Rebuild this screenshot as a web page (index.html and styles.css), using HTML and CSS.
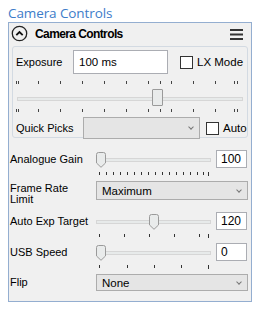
FILE: index.html
```html
<!DOCTYPE html>
<html lang="en">
<head>
    <meta charset="UTF-8">
    <meta name="viewport" content="width=device-width, initial-scale=1.0">
    <title>Camera Controls</title>
    <link rel="stylesheet" href="styles.css">
</head>
<body>
    <div class="title">Camera Controls</div>
    <div class="panel">
        <div class="header">
            <svg class="collapse" width="17" height="17" viewBox="0 0 17 17">
                <circle cx="8.5" cy="8.5" r="7.2" fill="none" stroke="#222" stroke-width="1.3"/>
                <path d="M5.3 10.2 L8.5 7 L11.7 10.2" fill="none" stroke="#111" stroke-width="1.8"/>
            </svg>
            <span class="header-title">Camera Controls</span>
            <svg class="menu" width="13" height="11" viewBox="0 0 13 11">
                <rect x="0" y="0" width="13" height="2" fill="#333"/>
                <rect x="0" y="4.5" width="13" height="2" fill="#333"/>
                <rect x="0" y="9" width="13" height="2" fill="#333"/>
            </svg>
        </div>

        <div class="group">
            <div class="exp-row">
                <span class="label exp-label">Exposure</span>
                <div class="textbox exp-box">100 ms</div>
                <span class="check"><span class="box"></span>LX Mode</span>
            </div>
            <div class="exp-slider">
                <svg class="ticks" width="226" height="4">
                    <g stroke="#444" stroke-width="1">
                        <line x1="2.5" y1="0" x2="2.5" y2="3"/><line x1="4.5" y1="0" x2="4.5" y2="3"/>
                        <line x1="24.5" y1="0" x2="24.5" y2="3"/><line x1="46.5" y1="0" x2="46.5" y2="3"/>
                        <line x1="68.5" y1="0" x2="68.5" y2="3"/><line x1="90.5" y1="0" x2="90.5" y2="3"/>
                        <line x1="112.5" y1="0" x2="112.5" y2="3"/><line x1="134.5" y1="0" x2="134.5" y2="3"/>
                        <line x1="146.5" y1="0" x2="146.5" y2="3"/><line x1="157.5" y1="0" x2="157.5" y2="3"/>
                        <line x1="179.5" y1="0" x2="179.5" y2="3"/><line x1="201.5" y1="0" x2="201.5" y2="3"/>
                        <line x1="220.5" y1="0" x2="220.5" y2="3"/><line x1="223.5" y1="0" x2="223.5" y2="3"/>
                    </g>
                </svg>
                <div class="track-area tall">
                    <div class="track"></div>
                    <div class="thumb-rect" style="left: 135px"></div>
                </div>
                <svg class="ticks" width="226" height="4">
                    <g stroke="#444" stroke-width="1">
                        <line x1="2.5" y1="0" x2="2.5" y2="3"/><line x1="4.5" y1="0" x2="4.5" y2="3"/>
                        <line x1="24.5" y1="0" x2="24.5" y2="3"/><line x1="46.5" y1="0" x2="46.5" y2="3"/>
                        <line x1="68.5" y1="0" x2="68.5" y2="3"/><line x1="90.5" y1="0" x2="90.5" y2="3"/>
                        <line x1="112.5" y1="0" x2="112.5" y2="3"/><line x1="134.5" y1="0" x2="134.5" y2="3"/>
                        <line x1="146.5" y1="0" x2="146.5" y2="3"/><line x1="157.5" y1="0" x2="157.5" y2="3"/>
                        <line x1="179.5" y1="0" x2="179.5" y2="3"/><line x1="201.5" y1="0" x2="201.5" y2="3"/>
                        <line x1="220.5" y1="0" x2="220.5" y2="3"/><line x1="223.5" y1="0" x2="223.5" y2="3"/>
                    </g>
                </svg>
            </div>
            <div class="qp-row">
                <span class="label qp-label">Quick Picks</span>
                <div class="combo qp-combo"><span></span><span class="chevron"></span></div>
                <span class="check"><span class="box"></span>Auto</span>
            </div>
        </div>

        <div class="row gain-row">
            <span class="label row-label">Analogue Gain</span>
            <div class="slider">
                <div class="track-area">
                    <div class="track"></div>
                    <svg class="thumb" style="left: 0px" width="10" height="16" viewBox="0 0 10 16">
                        <path d="M0.5 2.5 Q0.5 0.5 2.5 0.5 L7.5 0.5 Q9.5 0.5 9.5 2.5 L9.5 11 L5 15.3 L0.5 11 Z" fill="#e9ebeb" stroke="#9a9a9a"/>
                    </svg>
                </div>
                <svg class="ticks low" width="115" height="4">
                    <g stroke="#333" stroke-width="1">
                        <line x1="3.5" y1="0" x2="3.5" y2="3"/><line x1="10.5" y1="0" x2="10.5" y2="3"/>
                        <line x1="17.5" y1="0" x2="17.5" y2="3"/><line x1="24.5" y1="0" x2="24.5" y2="3"/>
                        <line x1="31.5" y1="0" x2="31.5" y2="3"/><line x1="38.5" y1="0" x2="38.5" y2="3"/>
                        <line x1="45.5" y1="0" x2="45.5" y2="3"/><line x1="52.5" y1="0" x2="52.5" y2="3"/>
                        <line x1="59.5" y1="0" x2="59.5" y2="3"/><line x1="66.5" y1="0" x2="66.5" y2="3"/>
                        <line x1="73.5" y1="0" x2="73.5" y2="3"/><line x1="80.5" y1="0" x2="80.5" y2="3"/>
                        <line x1="87.5" y1="0" x2="87.5" y2="3"/><line x1="94.5" y1="0" x2="94.5" y2="3"/>
                        <line x1="101.5" y1="0" x2="101.5" y2="3"/><line x1="107.5" y1="0" x2="107.5" y2="3"/>
                        <line x1="112.5" y1="0" x2="112.5" y2="4"/>
                    </g>
                </svg>
            </div>
            <div class="textbox num-box">100</div>
        </div>

        <div class="row frame-row">
            <span class="label row-label two-line">Frame Rate<br>Limit</span>
            <div class="combo wide-combo"><span>Maximum</span><span class="chevron"></span></div>
        </div>

        <div class="row exp-target-row">
            <span class="label row-label">Auto Exp Target</span>
            <div class="slider">
                <div class="track-area">
                    <div class="track"></div>
                    <svg class="thumb" style="left: 53px" width="10" height="16" viewBox="0 0 10 16">
                        <path d="M0.5 2.5 Q0.5 0.5 2.5 0.5 L7.5 0.5 Q9.5 0.5 9.5 2.5 L9.5 11 L5 15.3 L0.5 11 Z" fill="#e9ebeb" stroke="#9a9a9a"/>
                    </svg>
                </div>
                <svg class="ticks low" width="115" height="4">
                    <g stroke="#333" stroke-width="1">
                        <line x1="3.5" y1="0" x2="3.5" y2="3"/><line x1="28.5" y1="0" x2="28.5" y2="3"/>
                        <line x1="53.5" y1="0" x2="53.5" y2="3"/><line x1="78.5" y1="0" x2="78.5" y2="3"/>
                        <line x1="103.5" y1="0" x2="103.5" y2="3"/><line x1="112.5" y1="0" x2="112.5" y2="4"/>
                    </g>
                </svg>
            </div>
            <div class="textbox num-box">120</div>
        </div>

        <div class="row usb-row">
            <span class="label row-label">USB Speed</span>
            <div class="slider">
                <div class="track-area">
                    <div class="track"></div>
                    <svg class="thumb" style="left: 0px" width="10" height="16" viewBox="0 0 10 16">
                        <path d="M0.5 2.5 Q0.5 0.5 2.5 0.5 L7.5 0.5 Q9.5 0.5 9.5 2.5 L9.5 11 L5 15.3 L0.5 11 Z" fill="#e9ebeb" stroke="#9a9a9a"/>
                    </svg>
                </div>
                <svg class="ticks low" width="115" height="4">
                    <g stroke="#333" stroke-width="1">
                        <line x1="3.5" y1="0" x2="3.5" y2="3"/><line x1="31.5" y1="0" x2="31.5" y2="3"/>
                        <line x1="58.5" y1="0" x2="58.5" y2="3"/><line x1="85.5" y1="0" x2="85.5" y2="3"/>
                        <line x1="112.5" y1="0" x2="112.5" y2="4"/>
                    </g>
                </svg>
            </div>
            <div class="textbox num-box">0</div>
        </div>

        <div class="row flip-row">
            <span class="label row-label">Flip</span>
            <div class="combo wide-combo flip-combo"><span>None</span><span class="chevron"></span></div>
        </div>
    </div>
</body>
</html>
```

FILE: styles.css
```css
* {
    box-sizing: border-box;
}
body {
    margin: 0;
    background: white;
    font-family: "Liberation Sans", Arial, sans-serif;
    font-size: 11px;
    color: #000;
}
.title {
    height: 22px;
    padding-left: 8px;
    font-family: "Open Sans", sans-serif;
    font-size: 13.5px;
    line-height: 26px;
    color: #3d7cc9;
    letter-spacing: -0.1px;
}
.panel {
    margin-left: 8px;
    width: 244px;
    height: 280px;
    border: 1px solid #94aed0;
    background: #f0f0f0;
}
.header {
    display: flex;
    align-items: center;
    height: 21px;
    padding: 0 8px 0 2px;
}
.collapse {
    flex-shrink: 0;
}
.header-title {
    margin-left: 7px;
    font-weight: bold;
    font-size: 12px;
    letter-spacing: -0.6px;
    flex: 1;
}
.menu {
    margin-top: 1px;
}
.group {
    margin: 2px 3px 0 3px;
    height: 92px;
    border: 1px solid #d3dae2;
    border-radius: 3px;
}
.label {
    white-space: nowrap;
}
.exp-row {
    display: flex;
    align-items: center;
    height: 24px;
    margin-top: 3px;
    padding-left: 3px;
}
.exp-label {
    width: 57px;
}
.textbox {
    background: white;
    border: 1px solid #abadb3;
    padding-left: 4px;
    font-size: 12px;
}
.exp-box {
    width: 95px;
    height: 24px;
    line-height: 22px;
    font-size: 11.5px;
    padding-left: 5px;
}
.check {
    display: flex;
    align-items: center;
    font-size: 11.5px;
}
.check .box {
    width: 13px;
    height: 13px;
    border: 1px solid #333;
    background: white;
    margin-right: 4px;
}
.exp-row .check {
    margin-left: 12px;
}
.exp-slider {
    margin: 7px 0 0 1px;
}
.ticks {
    display: block;
}
.track-area {
    position: relative;
    height: 18px;
}
.track-area.tall {
    height: 22px;
    margin: 2px 0 0 3px;
    width: 226px;
}
.track {
    position: absolute;
    left: 0;
    right: 0;
    top: 7px;
    height: 4px;
    background: #e7eaea;
    border: 1px solid #d6d6d6;
}
.track-area.tall .track {
    top: 10px;
}
.thumb-rect {
    position: absolute;
    top: 2px;
    width: 11px;
    height: 17px;
    background: #e9ebeb;
    border: 1px solid #9a9a9a;
    border-radius: 1px;
}
.thumb {
    position: absolute;
    top: 1px;
}
.qp-row {
    display: flex;
    align-items: center;
    height: 22px;
    margin-top: 4px;
    padding-left: 3px;
}
.qp-label {
    width: 67px;
}
.combo {
    display: flex;
    align-items: center;
    justify-content: space-between;
    background: #e5e5e5;
    border: 1px solid #acacac;
    padding: 0 6px 0 5px;
    font-size: 11.5px;
}
.qp-combo {
    width: 117px;
    height: 22px;
}
.qp-row .check {
    margin-left: 6px;
}
.chevron {
    width: 4px;
    height: 4px;
    border-right: 1px solid #777;
    border-bottom: 1px solid #777;
    transform: rotate(45deg);
    margin-top: -2px;
}
.row {
    display: flex;
    align-items: flex-start;
    padding-left: 1px;
}
.row-label {
    width: 86px;
    line-height: 18px;
}
.two-line {
    line-height: 10.5px;
    margin-top: 2px;
}
.slider {
    width: 115px;
    margin-top: 1px;
}
.ticks.low {
    margin-top: 3px;
}
.num-box {
    width: 31px;
    height: 18px;
    line-height: 16px;
    margin-left: 5px;
}
.gain-row {
    margin-top: 12px;
    height: 26px;
}
.frame-row {
    margin-top: 5px;
    height: 20px;
}
.wide-combo {
    width: 152px;
    height: 19px;
}
.exp-target-row {
    margin-top: 11px;
    height: 24px;
}
.usb-row {
    margin-top: 7px;
    height: 23px;
}
.flip-row {
    margin-top: 8px;
    height: 18px;
}
.flip-row .row-label {
    line-height: 16px;
}
.flip-combo {
    height: 17px;
}
```
